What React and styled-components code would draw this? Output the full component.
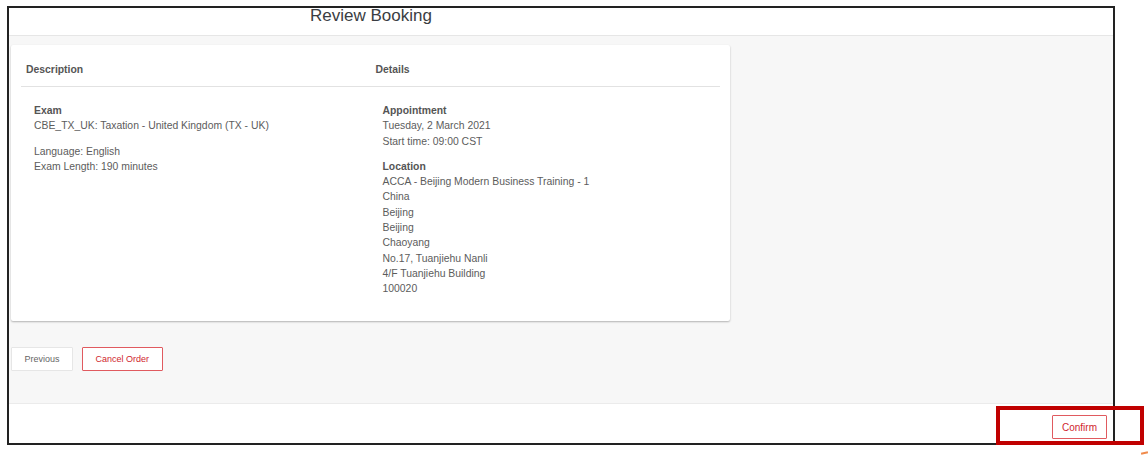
import React from 'react';
import styled, {createGlobalStyle} from 'styled-components';

const Global = createGlobalStyle`
    html, body{
        margin: 0;
        padding: 0;
        background: #fff;
    }
    body{
        font-family: "Liberation Sans", Arial, sans-serif;
        color: #555;
    }
`

const Frame = styled.div`
    position: relative;
    box-sizing: border-box;
    margin: 6px 0 0 7px;
    width: 1108px;
    height: 439px;
    border: 2px solid #222;
    display: flex;
    flex-direction: column;
`

const Header = styled.header`
    height: 27px;
    flex: none;
    border-bottom: 1px solid #e6e6e6;
    padding-left: 301px;
`

const Title = styled.h1`
    margin: 0;
    font-size: 17px;
    line-height: 16px;
    font-weight: normal;
    color: #3a3d42;
`

const Body = styled.main`
    flex: 1;
    background: #f7f7f7;
    border-bottom: 1px solid #ebebeb;
    padding: 9px 0 0 2px;
`

const Card = styled.section`
    width: 719px;
    box-sizing: border-box;
    background: #fff;
    border-radius: 2px;
    box-shadow: 0 1px 2px rgba(0, 0, 0, 0.28);
    padding: 0 10px 24px;
`

const Grid = styled.div`
    display: grid;
    grid-template-columns: 1fr 1fr;
`

const HeadCell = styled.div`
    padding: 18px 5px 9px;
    font-size: 10.4px;
    line-height: 14px;
    font-weight: bold;
    color: #555;
    border-bottom: 1px solid #e2e2e2;
`

const Cell = styled.div`
    padding: 16px 0 0 ${p => p.$indent}px;
    font-size: 10.4px;
`

const Group = styled.div`
    margin-bottom: 10px;
    &:last-child{
        margin-bottom: 0;
    }
`

const Line = styled.div`
    line-height: 15.3px;
    color: #5c5c5c;
    font-weight: ${p => (p.$bold ? 'bold' : 'normal')};
    ${p => p.$bold && 'color: #555;'}
`

const Actions = styled.div`
    display: flex;
    gap: 9px;
    margin-top: 26px;
`

const Button = styled.button`
    box-sizing: border-box;
    height: 24px;
    padding: 0 ${p => (p.$wide ? 9 : 12.5)}px;
    background: #fff;
    font-family: inherit;
    font-size: ${p => (p.$wide ? 10 : 9)}px;
    border: 1px solid ${p => (p.$danger ? '#e05a5f' : '#e6e6e6')};
    color: ${p => (p.$danger ? '#d0262e' : '#666')};
    border-radius: 1px;
    cursor: pointer;
`

const Footer = styled.footer`
    height: 39px;
    flex: none;
    display: flex;
    justify-content: flex-end;
    align-items: flex-start;
    padding: 11px 6px 0 0;
    box-sizing: border-box;
`

/* annotation drawn over the screenshot */
const Highlight = styled.div`
    position: absolute;
    left: 996px;
    top: 406px;
    width: 148px;
    height: 39px;
    box-sizing: border-box;
    border: 4px solid #c00000;
`

const Arrow = styled.div`
    position: absolute;
    left: 1141px;
    top: 452px;
    width: 7px;
    height: 2px;
    background: #f08a4b;
    transform: rotate(-12deg);
`

const description = [
    ['Exam', 'CBE_TX_UK: Taxation - United Kingdom (TX - UK)'],
    [null, 'Language: English', 'Exam Length: 190 minutes'],
];

const details = [
    ['Appointment', 'Tuesday, 2 March 2021', 'Start time: 09:00 CST'],
    ['Location', 'ACCA - Beijing Modern Business Training - 1', 'China', 'Beijing', 'Beijing', 'Chaoyang', 'No.17, Tuanjiehu Nanli', '4/F Tuanjiehu Building', '100020'],
];

function Groups({items}){
    return items.map((g, i) => (
        <Group key={i}>
            {g[0] && <Line $bold>{g[0]}</Line>}
            {g.slice(1).map(t => <Line key={t}>{t}</Line>)}
        </Group>
    ));
}

export default function App(){
    return (
        <>
            <Global />
            <Frame>
                <Header>
                    <Title>Review Booking</Title>
                </Header>
                <Body>
                    <Card>
                        <Grid>
                            <HeadCell>Description</HeadCell>
                            <HeadCell>Details</HeadCell>
                            <Cell $indent={13}><Groups items={description} /></Cell>
                            <Cell $indent={12}><Groups items={details} /></Cell>
                        </Grid>
                    </Card>
                    <Actions>
                        <Button>Previous</Button>
                        <Button $danger>Cancel Order</Button>
                    </Actions>
                </Body>
                <Footer>
                    <Button $danger $wide>Confirm</Button>
                </Footer>
            </Frame>
            <Highlight />
            <Arrow />
        </>
    );
}
